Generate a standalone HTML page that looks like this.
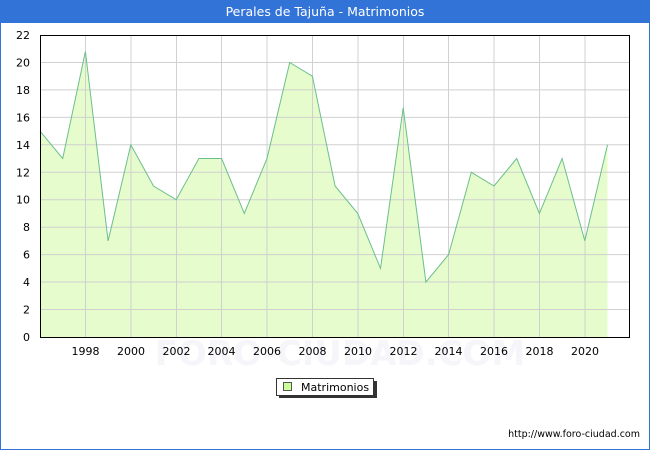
<!DOCTYPE html><html><head><meta charset="utf-8"><style>
body{margin:0;width:650px;height:450px;overflow:hidden;background:#fff;font-family:"DejaVu Sans","Liberation Sans",sans-serif}
</style></head><body>
<svg width="650" height="450" xmlns="http://www.w3.org/2000/svg" font-family="DejaVu Sans, Liberation Sans, sans-serif">
<rect x="0.5" y="0.5" width="649" height="449" fill="#fff" stroke="#3273d8"/>
<rect x="0" y="0" width="650" height="23" fill="#3273d8"/>
<text x="325" y="16" fill="#fff" font-size="12.5" text-anchor="middle">Perales de Tajuña - Matrimonios</text>
<text x="340" y="365" fill="#f5f5fa" font-size="34" font-weight="bold" text-anchor="middle">FORO-CIUDAD.COM</text>
<polygon fill="#e6fccc" points="40,337 40,131.1 62.7,158.5 85.4,51.5 108.1,240.9 130.8,144.8 153.5,186 176.2,199.7 198.9,158.5 221.6,158.5 244.3,213.5 267,158.5 289.7,62.5 312.4,76.2 335.1,186 357.8,213.5 380.5,268.4 403.2,107.8 425.9,282.1 448.6,254.6 471.3,172.3 494,186 516.7,158.5 539.4,213.5 562.1,158.5 584.8,240.9 607.5,144.8 607.5,337"/>
<g stroke="#d0d0d0" stroke-width="1">
<path d="M40 309.5H630M40 282H630M40 254.6H630M40 227.2H630M40 199.7H630M40 172.3H630M40 144.8H630M40 117.4H630M40 89.9H630M40 62.5H630"/>
<path d="M85.5 35V337M131 35V337M176.5 35V337M221.5 35V337M267 35V337M312.5 35V337M358 35V337M403.5 35V337M448.5 35V337M494 35V337M539.5 35V337M585 35V337"/>
</g>
<polyline fill="none" stroke="#6cbf8c" stroke-width="1" points="40,131.1 62.7,158.5 85.4,51.5 108.1,240.9 130.8,144.8 153.5,186 176.2,199.7 198.9,158.5 221.6,158.5 244.3,213.5 267,158.5 289.7,62.5 312.4,76.2 335.1,186 357.8,213.5 380.5,268.4 403.2,107.8 425.9,282.1 448.6,254.6 471.3,172.3 494,186 516.7,158.5 539.4,213.5 562.1,158.5 584.8,240.9 607.5,144.8"/>
<rect x="40.5" y="35.5" width="589" height="302" fill="none" stroke="#000"/>
<g font-size="11" fill="#000" text-anchor="end">
<text x="30" y="341">0</text><text x="30" y="313.5">2</text><text x="30" y="286">4</text><text x="30" y="258.6">6</text><text x="30" y="231.2">8</text><text x="30" y="203.7">10</text><text x="30" y="176.3">12</text><text x="30" y="148.8">14</text><text x="30" y="121.4">16</text><text x="30" y="93.9">18</text><text x="30" y="66.5">20</text><text x="30" y="39">22</text>
</g>
<g font-size="11" fill="#000" text-anchor="middle">
<text x="85.5" y="355">1998</text><text x="131" y="355">2000</text><text x="176.5" y="355">2002</text><text x="221.5" y="355">2004</text><text x="267" y="355">2006</text><text x="312.5" y="355">2008</text><text x="358" y="355">2010</text><text x="403.5" y="355">2012</text><text x="448.5" y="355">2014</text><text x="494" y="355">2016</text><text x="539.5" y="355">2018</text><text x="585" y="355">2020</text>
</g>
<rect x="279" y="381" width="98" height="17" fill="#333"/>
<rect x="276.5" y="378.5" width="97" height="17" fill="#fff" stroke="#333"/>
<rect x="283.5" y="382.5" width="8" height="8" fill="#ccff99" stroke="#555"/>
<text x="301" y="391" font-size="11">Matrimonios</text>
<text x="640" y="437" font-size="9.5" text-anchor="end">http://www.foro-ciudad.com</text>
</svg>
</body></html>
